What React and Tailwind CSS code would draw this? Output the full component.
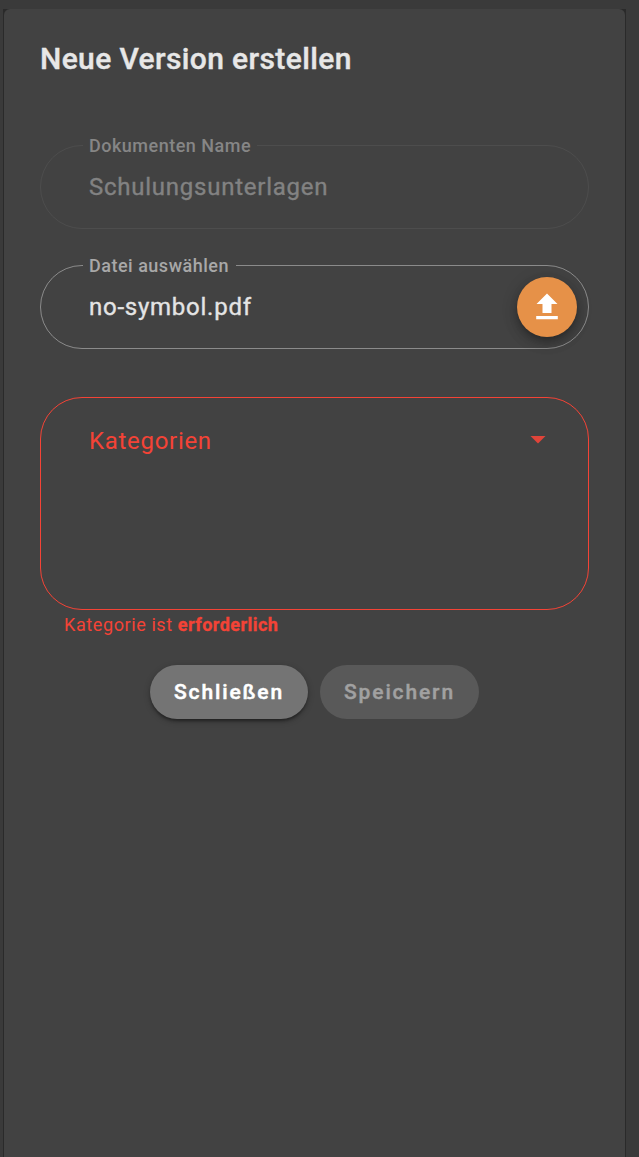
function OutlinedField({ label, value, frame, labelStyle, labelWidth, valueStyle, children }) {
  return (
    <div className={`relative flex h-[84px] items-center justify-between rounded-[42px] border pl-12 pr-[11px] ${frame}`}>
      <span className={`absolute -top-[12px] left-[42px] h-6 bg-[#424242] pl-1.5 text-[18px] leading-6 font-medium tracking-[0.5px] whitespace-nowrap ${labelWidth} ${labelStyle}`}>
        {label}
      </span>
      <span className={`text-[24px] leading-9 tracking-[0.75px] whitespace-nowrap [-webkit-text-stroke:0.35px_currentColor] ${valueStyle}`}>{value}</span>
      {children}
    </div>
  );
}

export default function App() {
  return (
    <div className="h-[1157px] w-[639px] overflow-hidden bg-[#3a3a3a] pt-[9px] pl-[3px] font-[Roboto,sans-serif]">
      <div className="h-[1148px] w-[623px] bg-[#2a2a2a]">
        <main className="ml-px flex h-full w-[621px] flex-col rounded-t-[6px] bg-[#424242] pr-9 pl-9">
          <h1 className="mt-[26px] h-12 text-[30px] leading-[48px] font-medium tracking-[0.375px] text-[#e7e7e7] [-webkit-text-stroke:0.4px_currentColor]">
            <span>Neue Version erstellen</span>
          </h1>

          <div className="mt-[62px]">
            <OutlinedField
              label="Dokumenten Name"
              value="Schulungsunterlagen"
              frame="border-[#4d4d4d]"
              labelStyle="text-[#868686]"
              labelWidth="w-[174px]"
              valueStyle="text-[#828282]"
            />
          </div>

          <div className="mt-9">
            <OutlinedField
              label="Datei auswählen"
              value="no-symbol.pdf"
              frame="border-[#8b8b8b]"
              labelStyle="text-[#a8a8a8]"
              labelWidth="w-[153px]"
              valueStyle="text-[#e4e4e4]"
            >
              <button
                aria-label="Datei auswählen"
                className="flex size-[60px] items-center justify-center rounded-full bg-[#e69148] shadow-[0_4px_8px_-1px_rgba(0,0,0,0.28),0_6px_14px_rgba(0,0,0,0.14),0_2px_20px_rgba(0,0,0,0.08)]"
              >
                <svg viewBox="0 0 24 24" className="size-9 fill-white">
                  <path d="M9 16v-6H5l7-7 7 7h-4v6H9zm-4.2 4.1v-2.1h14.4v2.1H4.8z" />
                </svg>
              </button>
            </OutlinedField>
          </div>

          <div className="mt-12 flex h-[213px] items-start justify-between rounded-[42px] border border-[#f44336] pt-[25px] pr-[42px] pl-12 text-[#f44336]">
            <span className="text-[24px] leading-9 tracking-[0.7px]">Kategorien</span>
            <svg viewBox="0 0 16 8" className="mt-[13px] h-2 w-4 fill-[#e04439]">
              <path d="M0.5 0h15L8 7.5z" />
            </svg>
          </div>
          <p className="h-[30px] pl-6 text-[18px] leading-[30px] tracking-[0.6px] text-[#f44336]">
            Kategorie ist <strong className="font-bold tracking-[0.47px] [-webkit-text-stroke:0.3px_currentColor]">erforderlich</strong>
          </p>

          <div className="mt-[25px] flex justify-center gap-3">
            <button className="h-[54px] w-[158px] rounded-full bg-[#747474] pt-px text-[21px] font-medium tracking-[1.875px] text-white shadow-[0_3px_3px_-1px_rgba(0,0,0,0.35),0_2px_6px_rgba(0,0,0,0.25)] [-webkit-text-stroke:0.5px_currentColor]">
              Schließen
            </button>
            <button disabled className="h-[54px] w-[159px] rounded-full bg-[#595959] pt-px text-[21px] font-medium tracking-[1.875px] text-[#a1a1a1] [-webkit-text-stroke:0.4px_currentColor]">
              Speichern
            </button>
          </div>
        </main>
      </div>
    </div>
  );
}
